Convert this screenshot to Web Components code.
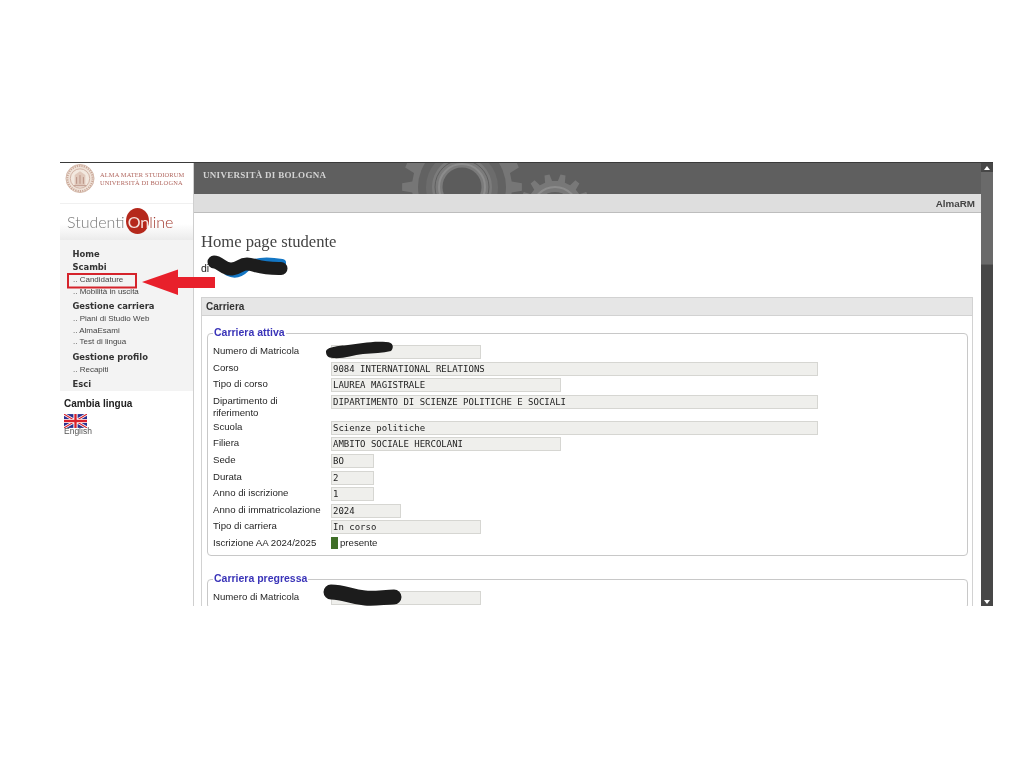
<!DOCTYPE html>
<html lang="it"><head><meta charset="utf-8"><title>Home page studente</title>
<style>
html,body{margin:0;background:#fff;font-family:"Liberation Sans",Arial,sans-serif}
body{padding:162px 0 0 60px;height:606px;overflow:hidden;position:relative}
</style></head><body>
<x-app>
  <x-sidebar slot="side">
    <x-menu-group slot="menu" title="Home"></x-menu-group>
    <x-menu-group slot="menu" title="Scambi"><x-menu-item>Candidature</x-menu-item><x-menu-item>Mobilità in uscita</x-menu-item></x-menu-group>
    <x-menu-group slot="menu" title="Gestione carriera" gap><x-menu-item>Piani di Studio Web</x-menu-item><x-menu-item>AlmaEsami</x-menu-item><x-menu-item>Test di lingua</x-menu-item></x-menu-group>
    <x-menu-group slot="menu" title="Gestione profilo" gap><x-menu-item>Recapiti</x-menu-item></x-menu-group>
    <x-menu-group slot="menu" title="Esci" gap></x-menu-group>
  </x-sidebar>
  <x-topbar slot="top"></x-topbar>
  <x-content slot="main">
    <x-panel title="Carriera">
      <x-fieldset legend="Carriera attiva">
        <x-field label="Numero di Matricola" width="150"></x-field>
        <x-field label="Corso" value="9084 INTERNATIONAL RELATIONS" width="487"></x-field>
        <x-field label="Tipo di corso" value="LAUREA MAGISTRALE" width="230"></x-field>
        <x-field label="Dipartimento di riferimento" value="DIPARTIMENTO DI SCIENZE POLITICHE E SOCIALI" width="487" tall></x-field>
        <x-field label="Scuola" value="Scienze politiche" width="487"></x-field>
        <x-field label="Filiera" value="AMBITO SOCIALE HERCOLANI" width="230"></x-field>
        <x-field label="Sede" value="BO" width="43"></x-field>
        <x-field label="Durata" value="2" width="43"></x-field>
        <x-field label="Anno di iscrizione" value="1" width="43"></x-field>
        <x-field label="Anno di immatricolazione" value="2024" width="70"></x-field>
        <x-field label="Tipo di carriera" value="In corso" width="150"></x-field>
        <x-field label="Iscrizione AA 2024/2025" status="presente"></x-field>
      </x-fieldset>
      <x-fieldset legend="Carriera pregressa" second>
        <x-field label="Numero di Matricola" width="150"></x-field>
      </x-fieldset>
    </x-panel>
  </x-content>
  <x-scrollbar slot="scroll"></x-scrollbar>
</x-app>
<x-annotations></x-annotations>
<script>
function def(name, html){
  customElements.define(name, class extends HTMLElement{
    constructor(){super();this.attachShadow({mode:'open'});}
    connectedCallback(){
      const get=a=>this.getAttribute(a);
      this.shadowRoot.innerHTML=typeof html==='function'?html(get,this):html;
    }
  });
}
const esc=s=>(s||'').replace(/&/g,'&amp;').replace(/</g,'&lt;');
function gear(cx,cy,ro,ri,n){
  let d='';const st=Math.PI*2/n;
  for(let i=0;i<n;i++){
    const a=i*st,p=(r,t)=>(cx+r*Math.cos(t)).toFixed(1)+' '+(cy+r*Math.sin(t)).toFixed(1);
    d+=(i?'L':'M')+p(ri,a-st*.28)+'L'+p(ro,a-st*.16)+'L'+p(ro,a+st*.16)+'L'+p(ri,a+st*.28);
  }
  return d+'z';
}

def('x-app',`<style>
:host{display:grid;width:933px;height:444px;grid-template-columns:134px 787px 12px;grid-template-rows:51px 1fr;border-top:1px solid #3a3a3a;box-sizing:border-box;overflow:hidden;background:#fff;filter:blur(.3px)}
.side{grid-row:1/3;grid-column:1;min-height:0}
.top{grid-column:2;grid-row:1}
.main{grid-column:2;grid-row:2;min-height:0;overflow:hidden}
.scroll{grid-column:3;grid-row:1/3;min-height:0}
</style>
<div class="side"><slot name="side"></slot></div>
<div class="top"><slot name="top"></slot></div>
<div class="main"><slot name="main"></slot></div>
<div class="scroll"><slot name="scroll"></slot></div>`);

def('x-sidebar',`<style>
:host{display:flex;flex-direction:column;height:100%;box-sizing:border-box;border-right:1px solid #cfcfcf;background:#fff}
.uni{height:31px;display:flex;align-items:center;gap:5px;padding-left:5px;box-sizing:border-box}
.uni svg{flex:none}
.uni div{font:6.400px/7.600px "Liberation Serif",serif;color:#b0665e;letter-spacing:.15px;white-space:nowrap}
.brand{margin-top:9px;height:37px;display:flex;align-items:center;padding:0 0 2px 7px;box-sizing:border-box;background:linear-gradient(#fff 0,#fff 55%,#ebebeb 100%);border-top:1px solid #f0f0f0;font:300 16px "Lato",sans-serif;color:#777}
.on{position:relative;display:inline-block;color:#f5e4e0;z-index:0;font-weight:400;margin-left:3px}
.on::before{content:"";position:absolute;left:-2px;top:50%;width:23px;height:26px;margin-top:-13px;border-radius:50%;background:#b5281c;z-index:-1}
.line{color:#a1392e}
.menu{background:#f3f3f3;padding:8px 0 0;box-sizing:border-box;height:151px}
.lang{padding:7px 0 0 4px;color:#222}
.lang b{display:block;font:bold 10px/12px "Liberation Sans",sans-serif}
.lang svg{display:block;margin-top:4px}
.lang span{display:block;font-size:8.500px;line-height:7px;color:#555}
</style>
<div class="uni">
<svg width="30" height="31" viewBox="0 0 31 31"><circle cx="15.500" cy="15.500" r="14.500" fill="#efe2d8" stroke="#d3b8aa" stroke-width="1"/><circle cx="15.500" cy="15.500" r="13" fill="none" stroke="#c9a697" stroke-width="2" stroke-dasharray="1.200 1.200"/><circle cx="15.500" cy="15.500" r="10" fill="#f2e8df" stroke="#c9a697" stroke-width=".8"/><path d="M10 23V12l5.500-4 5.500 4v11z" fill="#e0c8bb"/><path d="M12 21v-7M15.500 21v-9M19 21v-7M9 23h13" stroke="#b89284" stroke-width="1"/></svg>
<div>ALMA MATER STUDIORUM<br>UNIVERSITÀ DI BOLOGNA</div></div>
<div class="brand"><span>Studenti</span><span class="on">On</span><span class="line">line</span></div>
<div class="menu"><slot name="menu"></slot></div>
<div class="lang"><b>Cambia lingua</b>
<svg width="23" height="14" viewBox="0 0 60 36"><rect width="60" height="36" fill="#2a2f8f"/><path d="M0 0L60 36M60 0L0 36" stroke="#fff" stroke-width="7"/><path d="M0 0L60 36M60 0L0 36" stroke="#d8202c" stroke-width="3"/><path d="M30 0V36M0 18H60" stroke="#fff" stroke-width="11"/><path d="M30 0V36M0 18H60" stroke="#d8202c" stroke-width="6"/></svg>
<span>English</span></div>`);

def('x-menu-group',(g)=>`<style>
:host{display:block;${g('gap')!==null?'margin-top:2.300px;':''}}
.h{font:bold 8.400px/13px "DejaVu Sans",sans-serif;color:#333;padding-left:12.500px}
</style><div class="h">${esc(g('title'))}</div><slot></slot>`);

def('x-menu-item',`<style>
:host{display:block;font:8px/11.800px "Liberation Sans",sans-serif;color:#444;padding-left:13px}
</style>.. <slot></slot>`);

def('x-topbar',()=>`<style>
:host{display:block;height:50px;position:relative;overflow:hidden;background:#dedede}
.dark{height:31px;background:#5f5f5f;display:flex;align-items:center;padding:0 0 7px 9px;box-sizing:border-box;font:bold 9px "Liberation Serif",serif;color:#d4d4d4;letter-spacing:.3px;position:relative}
.light{height:19px;border-bottom:1px solid #bdbdbd;box-sizing:border-box;display:flex;justify-content:flex-end;align-items:center;padding-right:6px;font:bold 9.800px "Liberation Sans",sans-serif;color:#444}
svg{position:absolute;left:0;top:0}
span{position:relative}
</style>
<div class="dark">
<svg width="787" height="31" viewBox="0 0 787 31">
 <path d="${gear(268,24,60,50,16)}" fill="#767676"/>
 <circle cx="268" cy="24" r="44" fill="#626262"/>
 <circle cx="268" cy="24" r="36" fill="#6c6c6c"/>
 <circle cx="268" cy="24" r="30" fill="#7b7b7b"/>
 <circle cx="268" cy="24" r="27" fill="none" stroke="#5f5f5f" stroke-width="1"/>
 <circle cx="268" cy="24" r="23" fill="none" stroke="#8c8c8c" stroke-width="2"/>
 <circle cx="268" cy="24" r="19.500" fill="#5c5c5c"/>
 <path d="${gear(361,47,36,29,14)}" fill="#787878"/>
 <circle cx="361" cy="47" r="23" fill="none" stroke="#8c8c8c" stroke-width="2"/>
 <circle cx="361" cy="47" r="18" fill="#5f5f5f"/>
</svg><span>UNIVERSITÀ DI BOLOGNA</span></div>
<div class="light">AlmaRM</div>`);

def('x-content',`<style>
:host{display:block;padding:18px 8px 0 7px;box-sizing:border-box;height:100%}
h1{margin:0;font:400 16.600px/20px "Liberation Serif",serif;color:#444}
p{margin:10px 0 0;font:10.500px/13px "Liberation Sans",sans-serif;color:#222;height:13px}
.sp{height:22px}
</style><h1>Home page studente</h1><p>di</p><div class="sp"></div><slot></slot>`);

def('x-panel',(g)=>`<style>
:host{display:block;border:1px solid #d2d2d2;border-bottom:0;padding:0 4px 0 5px}
.h{margin:0 -4px 0 -5px;height:17px;background:#e6e6e6;border-bottom:1px solid #d2d2d2;font:bold 10px/17px "Liberation Sans",sans-serif;color:#333;padding-left:4px}
</style><div class="h">${esc(g('title'))}</div><slot></slot>`);

def('x-fieldset',(g)=>`<style>
:host{display:block;${g('second')!==null?'margin-top:17px;':'margin-top:11px;'}}
fieldset{margin:0;border:1px solid #c8c8c8;border-radius:4px;padding:5px 5px 1px;min-width:0}
legend{padding:0 1px;margin-left:0;font:bold 10.500px/13px "Liberation Sans",sans-serif;color:#3a34b8;transform:translateY(-1px)}
</style><fieldset><legend>${esc(g('legend'))}</legend><slot></slot></fieldset>`);

def('x-field',(g)=>{
  const st=g('status'), tall=g('tall')!==null;
  const val=st!==null
   ? `<span class="st"><i></i>${esc(st)}</span>`
   : `<span class="inp" style="width:${g('width')}px">${esc(g('value'))}</span>`;
  return `<style>
:host{display:grid;grid-template-columns:118px auto;min-height:16.600px;${tall?'height:26px;':''}align-items:start;font:9.650px/12px "Liberation Sans",sans-serif;color:#262626}
.l{padding-right:${tall?'30px':'2px'}}
.inp{display:block;box-sizing:border-box;height:14px;background:#efefec;border:1px solid #d6d6d2;font:9px/13px "DejaVu Sans Mono",monospace;color:#222;padding-left:1px;white-space:pre}
.st{display:flex;align-items:center;gap:2px}
i{display:block;width:7px;height:12px;background:#3f6e27}
</style><div class="l">${esc(g('label'))}</div><div>${val}</div>`;
});

def('x-scrollbar',`<style>
:host{display:flex;flex-direction:column;height:100%;background:#474747;color:#fff}
.a{height:9px;display:flex;align-items:center;justify-content:center;flex:none}
.t{height:92px;background:#6a6a6a;border-bottom:1px solid #5a5a5a;flex:none}
.f{flex:1}
</style>
<div class="a"><svg width="6" height="4"><path d="M3 0L6 4H0z" fill="#fff"/></svg></div>
<div class="t"></div><div class="f"></div>
<div class="a"><svg width="6" height="4"><path d="M0 0H6L3 4z" fill="#fff"/></svg></div>`);

def('x-annotations',`<style>
:host{display:block;position:absolute;left:0;top:0;width:1024px;height:768px;pointer-events:none}
svg{position:absolute;left:0;top:0}
</style>
<svg width="1024" height="768" viewBox="0 0 1024 768" fill="none">
<rect x="68" y="274" width="68" height="13.500" stroke="#d5232b" stroke-width="2"/>
<path d="M142 282L178 269.500V277H215V288H178V295z" fill="#e8202b"/>
<path d="M228 272C234 275 240 274 246 268C252 262 265 260 282 263" stroke="#1376c4" stroke-width="8" stroke-linecap="round"/>
<path d="M214 262C220 262 224 270 232 269C240 268 240 264 247 264C255 264 258 269 281 268.500" stroke="#1c1c1c" stroke-width="13" stroke-linecap="round"/>
<path d="M326 352c0-5 12-6 22-7 12-1 22-4 38-3 8 0 8 6 5 9-8 2-18 2-28 3-10 1-20 5-30 4-5 0-7-3-7-6z" fill="#1c1c1c"/>
<path d="M331 592C345 592 350 597 365 598C375 599 385 597 394 597" stroke="#1c1c1c" stroke-width="15" stroke-linecap="round"/>
</svg>`);
</script>
</body></html>
